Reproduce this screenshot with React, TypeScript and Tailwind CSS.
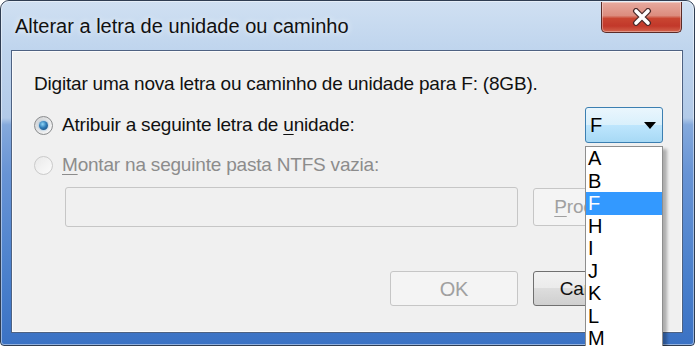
import React from "react";

const sans = "font-['Liberation_Sans',Arial,sans-serif]";

function Radio({ checked, disabled }: { checked?: boolean; disabled?: boolean }) {
  return (
    <div
      className={`flex h-[19px] w-[19px] shrink-0 items-center justify-center rounded-full border ${
        disabled
          ? "border-[#cacaca] bg-[linear-gradient(135deg,#e9e9e9,#fbfbfb)]"
          : "border-[#8a8c8e] bg-[linear-gradient(135deg,#cfd1d3,#fbfbfb)]"
      }`}
    >
      {checked && (
        <div className="h-[9px] w-[9px] rounded-full bg-[radial-gradient(circle_at_40%_35%,#8fd6f7_0%,#2f7db9_45%,#0f3d6c_100%)] shadow-[0_0_2px_rgba(60,150,220,0.8)]" />
      )}
    </div>
  );
}

function CloseButton() {
  return (
    <div className="flex h-[31px] w-[81px] items-center justify-center rounded-b-[5px] border border-t-0 border-[#5b2b27] bg-[linear-gradient(180deg,#e7aa9f_0%,#dc8c7e_45%,#c94531_55%,#c2382a_80%,#d3634c_100%)] shadow-[inset_0_0_0_1px_rgba(255,255,255,0.35)]">
      <svg width="24" height="18" viewBox="0 0 24 18">
        <path d="M6 3 L18 15 M18 3 L6 15" stroke="#4a2a2a" strokeWidth="6" strokeLinecap="round" />
        <path d="M6 3 L18 15 M18 3 L6 15" stroke="#ffffff" strokeWidth="3.6" strokeLinecap="round" />
      </svg>
    </div>
  );
}

function DriveCombo() {
  const letters = ["A", "B", "F", "H", "I", "J", "K", "L", "M", "N"];
  return (
    <div className="relative h-[36px] w-[78px]">
      <div className="flex h-full items-center justify-between rounded-[3px] border border-[#3c7fb1] bg-[linear-gradient(180deg,#eaf6fd_0%,#d9f0fc_50%,#bee6fd_50%,#a7d9f5_100%)] pl-[4px] pr-[6px]">
        <span className="text-[20px] leading-[24px] text-black">F</span>
        <svg width="12" height="7" viewBox="0 0 12 7">
          <path d="M0 0 H12 L6 7 Z" fill="#000" />
        </svg>
      </div>
      <div className="absolute left-0 top-full z-10 mt-[3px] h-[215px] w-[78px] overflow-hidden border border-[#8e8e8e] bg-white shadow-[4px_3px_3px_rgba(0,0,0,0.28)]">
        {letters.map((l) => (
          <div
            key={l}
            className={`h-[22.5px] pl-[2px] text-[20px] leading-[22.5px] tracking-normal ${
              l === "F" ? "bg-[#3399ff] text-white" : "text-black"
            }`}
          >
            {l}
          </div>
        ))}
      </div>
    </div>
  );
}

export default function App() {
  return (
    <div className={`h-[346px] w-[695px] overflow-hidden bg-white ${sans}`}>
      <div className="h-[346px] rounded-t-[9px] rounded-b-[4px] border border-[#2f3d52] bg-[linear-gradient(180deg,#d0e0f2_0%,#bed4ed_15%,#b2cae8_34%,#84a9dc_36%,#6894d5_50%,#4a80cc_80%,#3b72c4_100%)]">
        <div className="flex h-full flex-col rounded-t-[8px] rounded-b-[3px] border border-white/45 pb-[11px] pl-[9px] pr-[10px]">
          {/* title bar */}
          <div className="flex h-[48px] shrink-0 items-start justify-between pl-[4px] pr-[1px]">
            <div className="pt-[12px] text-[20px] leading-[24px] text-[#111] [text-shadow:0_0_6px_rgba(255,255,255,0.9)]">
              Alterar a letra de unidade ou caminho
            </div>
            <CloseButton />
          </div>

          {/* client area */}
          <div className="flex-1 border border-[#4e6282]">
            <div className="h-full border border-[#fbfbfb] bg-[#f0f0f0] pl-[21px] pr-[18px] pt-[20px] text-[19px] leading-[24px] tracking-[-0.2px] text-[#111]">
              <div className="h-[24px]">Digitar uma nova letra ou caminho de unidade para F: (8GB).</div>

              <div className="mt-[11px] flex h-[36px] items-center justify-between">
                <div className="flex items-center gap-[9px]">
                  <Radio checked />
                  <span>
                    Atribuir a seguinte letra de <span className="underline underline-offset-[3px]">u</span>nidade:
                  </span>
                </div>
                <DriveCombo />
              </div>

              <div className="mt-[10px] flex h-[24px] items-center gap-[9px] text-[#8c8c8c]">
                <Radio disabled />
                <span>
                  <span className="underline underline-offset-[3px]">M</span>ontar na seguinte pasta NTFS vazia:
                </span>
              </div>

              <div className="mt-[10px] flex h-[40px] items-center gap-[15px] pl-[31px] pr-[2px]">
                <div className="h-[40px] flex-1 rounded-[3px] border border-[#c6c6c6] bg-[#f0f0f0]" />
                <div className="flex h-[38px] w-[128px] items-center justify-center rounded-[3px] border border-[#c6c6c6] bg-[#f4f4f4] text-[#a0a0a0]">
                  <span>
                    <span className="underline underline-offset-[3px]">P</span>rocurar...
                  </span>
                </div>
              </div>

              <div className="mt-[44px] flex justify-end gap-[15px] pr-[2px]">
                <div className="flex h-[35px] w-[128px] items-center justify-center rounded-[3px] border border-[#c6c6c6] bg-[#f4f4f4] text-[20px] text-[#a0a0a0]">
                  OK
                </div>
                <div className="flex h-[35px] w-[128px] items-center justify-center rounded-[3px] border border-[#707070] bg-[linear-gradient(180deg,#f2f2f2_0%,#ebebeb_50%,#dddddd_50%,#cfcfcf_100%)] text-[#111]">
                  Cancelar
                </div>
              </div>
            </div>
          </div>
        </div>
      </div>
    </div>
  );
}
